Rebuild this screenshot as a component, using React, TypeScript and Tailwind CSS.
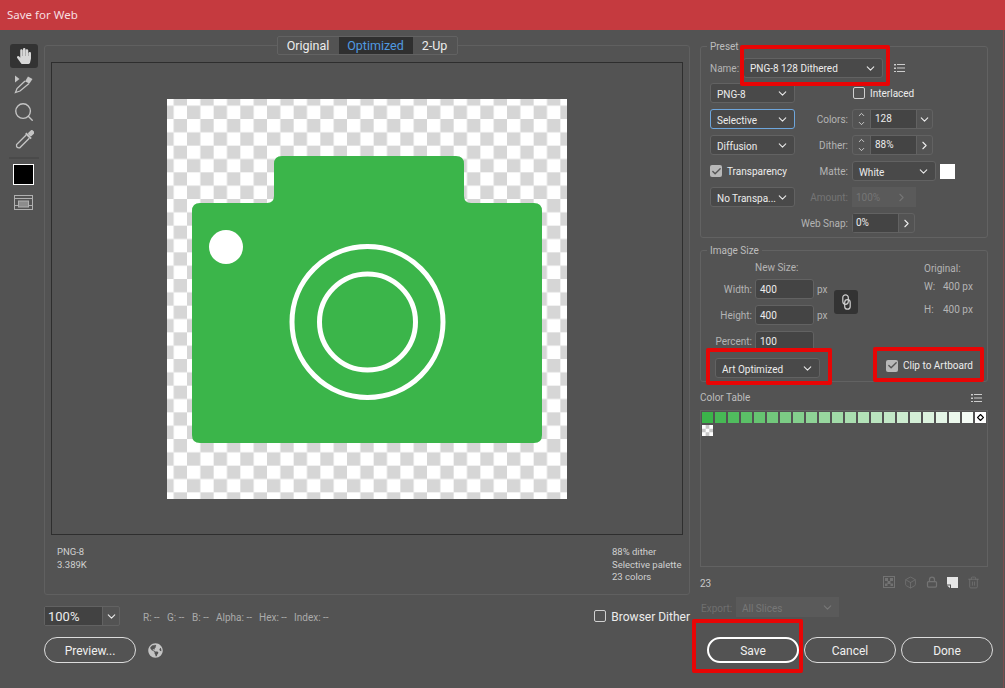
import { ReactNode } from "react";
import { ChevronDown, ChevronRight, ChevronUp, Check, Search, Box, Lock, Trash2 } from "lucide-react";
import { FaHandPaper, FaGlobeAmericas } from "react-icons/fa";

const swatches = [
  "bg-[#3bb54a]", "bg-[#47b955]", "bg-[#50bc5e]", "bg-[#5bc067]", "bg-[#66c471]", "bg-[#72c87c]",
  "bg-[#7ccc85]", "bg-[#84cf8d]", "bg-[#8ed396]", "bg-[#98d79f]", "bg-[#a1dba8]", "bg-[#aadeb0]",
  "bg-[#b3e2b8]", "bg-[#bae4bf]", "bg-[#c3e8c7]", "bg-[#cdecd0]", "bg-[#d3eed6]", "bg-[#dcf2de]",
  "bg-[#e4f5e6]", "bg-[#ebf8ec]", "bg-[#f4fbf5]",
];

const Select = ({ label, className, nudge = false }: { label: string; className: string; nudge?: boolean }) => (
  <div className={`h-[20px] flex items-center justify-between pl-[6px] pr-[5px] rounded-[3px] border border-[#626262] bg-[#494949] text-[#ececec] ${className}`}>
    <span className={`whitespace-nowrap ${nudge ? "pt-[2px]" : ""}`}>{label}</span>
    <ChevronDown size={13} strokeWidth={2} className="text-[#e8e8e8] shrink-0" />
  </div>
);

const Stepper = ({ value, right }: { value: string; right: ReactNode }) => (
  <div className="h-[20px] w-[81px] flex rounded-[3px] border border-[#626262] text-[#ececec]">
    <div className="w-[18px] flex flex-col items-center justify-center border-r border-[#626262]">
      <ChevronUp size={9} strokeWidth={2} />
      <ChevronDown size={9} strokeWidth={2} />
    </div>
    <div className="w-[45px] bg-[#444444] pl-[4px] leading-[18px]">{value}</div>
    <div className="flex-1 flex items-center justify-center border-l border-[#626262]">{right}</div>
  </div>
);

const Label = ({ children, className = "" }: { children: ReactNode; className?: string }) => (
  <div className={`h-[20px] text-right text-[#b4b4b4] leading-[20px] pt-[1px] ${className}`}>{children}</div>
);

const Legend = ({ children }: { children: ReactNode }) => (
  <div className="-mt-[7px] ml-[6px] px-[3px] w-fit h-[14px] leading-[14px] bg-[#535353] text-[#bdbdbd]">{children}</div>
);

const ListIcon = ({ className = "" }: { className?: string }) => (
  <svg width="11" height="8" viewBox="0 0 11 8" className={className} fill="#cccccc">
    <rect x="0" y="0" width="2" height="1.5" />
    <rect x="3" y="0" width="8" height="1" />
    <rect x="0" y="3.5" width="2" height="1.5" />
    <rect x="3" y="3.5" width="8" height="1" />
    <rect x="0" y="7" width="2" height="1" />
    <rect x="3" y="7" width="8" height="1" />
  </svg>
);

const FieldInput = ({ value }: { value: string }) => (
  <div className="h-[20px] w-[59px] pl-[4px] leading-[19px] rounded-[3px] border border-[#626262] bg-[#444444] text-[#ececec]">{value}</div>
);

const PillButton = ({ children, primary = false }: { children: ReactNode; primary?: boolean }) => (
  <button className={`w-[92px] h-[26px] pt-[1px] rounded-full text-[12px] text-[#f0f0f0] ${primary ? "border-2 border-white" : "border border-[#dcdcdc]"}`}>
    {children}
  </button>
);

const CheckBox = ({ checked = false }: { checked?: boolean }) =>
  checked ? (
    <div className="w-[12px] h-[12px] rounded-[2px] bg-[#b8b8b8] flex items-center justify-center">
      <Check size={11} strokeWidth={3} className="text-[#555555]" />
    </div>
  ) : (
    <div className="w-[12px] h-[12px] rounded-[2px] border border-[#d0d0d0]" />
  );

const Toolbar = () => (
  <div className="w-[44px] shrink-0 flex flex-col items-start pl-[10px] pt-[14px] text-[#c4c4c4]">
    <div className="w-[28px] h-[24px] rounded-[3px] bg-[#333333] flex items-center justify-center">
      <FaHandPaper size={16} className="text-[#d8d8d8]" />
    </div>
    <svg width="20" height="20" viewBox="0 0 20 20" className="mt-[6px] ml-[4px]" fill="none" stroke="#c4c4c4">
      <path d="M1 1.5 L5.5 5 L1 8.5 Z" fill="#c4c4c4" stroke="none" />
      <path d="M14 2.5 L18.5 5 L15.5 9.5 L11 7.5 Z" fill="#c4c4c4" stroke="none" />
      <path d="M11 7 L3 14.5 L1.5 18.5 L6 17 L15 9.5" strokeWidth="1.3" />
    </svg>
    <Search size={22} strokeWidth={1.5} className="mt-[7px] ml-[3px] text-[#c4c4c4]" />
    <svg width="20" height="20" viewBox="0 0 20 20" className="mt-[7px] ml-[4px]" fill="none" stroke="#c4c4c4">
      <g transform="rotate(45 10 10)">
        <rect x="8" y="-3" width="4.5" height="6" rx="1.5" fill="#c4c4c4" stroke="none" />
        <rect x="6.5" y="3" width="7.5" height="2" fill="#c4c4c4" stroke="none" />
        <path d="M8 5 L8 18.5 Q10.2 21.5 12.5 18.5 L12.5 5" strokeWidth="1.3" />
      </g>
    </svg>
    <div className="w-[30px] h-[2px] -ml-[1px] mt-[7px] bg-[#4a4a4a]" />
    <div className="w-[21px] h-[21px] ml-[3px] mt-[5px] bg-black border border-white" />
    <svg width="19" height="15" viewBox="0 0 19 15" className="mt-[10px] ml-[4px]" fill="none" stroke="#b0b0b0">
      <rect x="0.5" y="0.5" width="18" height="14" />
      <path d="M0.5 3.5 H18.5" />
      <rect x="4.5" y="6" width="10" height="6" fill="#8c8c8c" />
      <path d="M0.5 10.5 H4.5 M14.5 10.5 H18.5" />
    </svg>
  </div>
);

const Artwork = () => (
  <svg width="400" height="400" viewBox="0 0 400 400">
    <defs>
      <pattern id="checker" x="-6.67" y="-6.67" width="26.667" height="26.667" patternUnits="userSpaceOnUse">
        <rect width="26.667" height="26.667" fill="#ffffff" />
        <rect x="13.333" width="13.333" height="13.333" fill="#d6d6d6" />
        <rect y="13.333" width="13.333" height="13.333" fill="#d6d6d6" />
      </pattern>
    </defs>
    <rect width="400" height="400" fill="url(#checker)" />
    <path
      d="M115 57 H289 Q297 57 297 65 V97 Q297 104 304 104 H367 Q375 104 375 112 V336 Q375 344 367 344 H33 Q25 344 25 336 V112 Q25 104 33 104 H100 Q107 104 107 97 V65 Q107 57 115 57 Z"
      fill="#3bb54a"
    />
    <circle cx="59" cy="148" r="17" fill="#ffffff" />
    <circle cx="200.5" cy="223" r="75.5" fill="none" stroke="#ffffff" strokeWidth="5" />
    <circle cx="200.5" cy="223" r="48" fill="none" stroke="#ffffff" strokeWidth="5" />
  </svg>
);

const PreviewPane = () => (
  <div className="w-[646px] shrink-0 flex flex-col">
    <div className="relative z-10 mt-[6px] -mb-[10px] h-[19px] flex justify-center text-[12.5px] leading-[17px] text-[#ececec]">
      <div className="flex rounded-[2px] border border-[#626262] bg-[#535353]">
        <div className="w-[61px] text-center">Original</div>
        <div className="w-[74px] text-center bg-[#2f2f2f] text-[#4f9ae0]">Optimized</div>
        <div className="w-[44px] text-center">2-Up</div>
      </div>
    </div>
    <div className="h-[550px] rounded-[3px] border border-[#606060] px-[6px] pt-[16px]">
      <div className="h-[473px] w-[632px] border border-[#2e2e2e] flex items-center justify-center">
        <Artwork />
      </div>
      <div className="mt-[11px] pl-[6px] pr-[6px] flex justify-between text-[9.5px] leading-[12.5px] text-[#d0d0d0]">
        <div>
          <div>PNG-8</div>
          <div>3.389K</div>
        </div>
        <div className="w-[65px] whitespace-nowrap">
          <div>88% dither</div>
          <div>Selective palette</div>
          <div>23 colors</div>
        </div>
      </div>
    </div>
    <div className="mt-[11px] h-[20px] flex items-center">
      <div className="w-[76px] h-[20px] flex rounded-[2px] border border-[#626262] text-[13px] text-[#ececec]">
        <div className="w-[57px] bg-[#424242] pl-[3px] leading-[20px]">100%</div>
        <div className="flex-1 flex items-center justify-center border-l border-[#626262]">
          <ChevronDown size={13} strokeWidth={2} />
        </div>
      </div>
      <div className="ml-[23px] pt-[2px] flex text-[10px] text-[#ababab]">
        <span className="w-[24px]">R: --</span>
        <span className="w-[25px]">G: --</span>
        <span className="w-[24px]">B: --</span>
        <span className="w-[43px]">Alpha: --</span>
        <span className="w-[35px]">Hex: --</span>
        <span>Index: --</span>
      </div>
      <div className="ml-auto flex items-center gap-[5px] text-[12px] text-[#ececec]">
        <CheckBox />
        <span className="pt-[1px]">Browser Dither</span>
      </div>
    </div>
    <div className="mt-[11px] flex items-center">
      <PillButton>Preview...</PillButton>
      <FaGlobeAmericas size={15} className="ml-[12px] text-[#c4c4c4]" />
    </div>
  </div>
);

const PresetPanel = () => (
  <div className="h-[192px] rounded-[3px] border border-[#626262]">
    <Legend>Preset</Legend>
    <div className="mt-[4px] pl-[9px] flex flex-col gap-[6px]">
      <div className="flex items-center mb-[-1px]">
        <Label className="w-[29px]">Name:</Label>
        <Select label="PNG-8 128 Dithered" className="ml-[4px] w-[140px]" />
        <ListIcon className="ml-[11px]" />
      </div>
      <div className="flex items-center">
        <Select label="PNG-8" className="w-[85px]" nudge />
        <div className="ml-[58px] flex items-center gap-[5px] text-[#ececec]">
          <CheckBox />
          <span>Interlaced</span>
        </div>
      </div>
      <div className="flex items-center">
        <Select label="Selective" className="w-[85px] !border-[#6ea6dc]" nudge />
        <Label className="w-[53px]">Colors:</Label>
        <div className="ml-[4px]">
          <Stepper value="128" right={<ChevronDown size={13} strokeWidth={2} />} />
        </div>
      </div>
      <div className="flex items-center">
        <Select label="Diffusion" className="w-[85px]" nudge />
        <Label className="w-[53px]">Dither:</Label>
        <div className="ml-[4px]">
          <Stepper value="88%" right={<ChevronRight size={13} strokeWidth={2} />} />
        </div>
      </div>
      <div className="flex items-center">
        <div className="w-[85px] flex items-center gap-[5px] text-[#ececec]">
          <CheckBox checked />
          <span>Transparency</span>
        </div>
        <Label className="w-[53px]">Matte:</Label>
        <Select label="White" className="ml-[4px] w-[84px]" nudge />
        <div className="ml-[4px] w-[15px] h-[15px] bg-white" />
      </div>
      <div className="flex items-center">
        <Select label="No Transpa..." className="w-[85px]" nudge />
        <Label className="w-[53px] !text-[#757575]">Amount:</Label>
        <div className="ml-[4px] w-[64px] h-[20px] pl-[4px] pr-[8px] flex items-center justify-between bg-[#5a5a5a] text-[#757575]">
          100%
          <ChevronRight size={13} strokeWidth={2} />
        </div>
      </div>
      <div className="flex items-center">
        <div className="w-[85px]" />
        <Label className="w-[53px] whitespace-nowrap">Web Snap:</Label>
        <div className="ml-[4px] w-[63px] h-[20px] flex rounded-[3px] border border-[#626262] text-[#ececec]">
          <div className="w-[45px] bg-[#444444] pl-[3px] leading-[18px]">0%</div>
          <div className="flex-1 flex items-center justify-center border-l border-[#626262]">
            <ChevronRight size={13} strokeWidth={2} />
          </div>
        </div>
      </div>
    </div>
  </div>
);

const ImageSizePanel = () => (
  <div className="mt-[12px] h-[132px] rounded-[3px] border border-[#626262]">
    <Legend>Image Size</Legend>
    <div className="mt-[2px] flex">
      <div className="w-[129px]">
        <div className="pl-[54px] h-[16px] leading-[16px] text-[#b4b4b4]">New Size:</div>
        <div className="mt-[3px] flex flex-col gap-[6px]">
          <div className="flex h-[20px]">
            <Label className="w-[51px]">Width:</Label>
            <div className="ml-[3px]"><FieldInput value="400" /></div>
            <span className="ml-[3px] pt-[1px] leading-[20px] text-[#b4b4b4]">px</span>
          </div>
          <div className="flex h-[20px]">
            <Label className="w-[51px]">Height:</Label>
            <div className="ml-[3px]"><FieldInput value="400" /></div>
            <span className="ml-[3px] pt-[1px] leading-[20px] text-[#b4b4b4]">px</span>
          </div>
          <div className="flex h-[20px]">
            <Label className="w-[51px]">Percent:</Label>
            <div className="ml-[3px]"><FieldInput value="100" /></div>
          </div>
        </div>
      </div>
      <div className="ml-[4px] mt-[30px] w-[24px] h-[24px] rounded-[3px] bg-[#333333] flex items-center justify-center">
        <svg width="9" height="16" viewBox="0 0 9 16" fill="none" stroke="#d0d0d0" strokeWidth="1.2">
          <rect x="0.8" y="0.8" width="5.5" height="9.5" rx="2.75" />
          <rect x="2.7" y="5.7" width="5.5" height="9.5" rx="2.75" />
        </svg>
      </div>
      <div className="ml-[66px] pt-[1px] text-[#b4b4b4]">
        <div className="h-[16px] leading-[16px]">Original:</div>
        <div className="mt-[2px] h-[16px] leading-[16px] flex">
          <span className="w-[19px]">W:</span>
          <span>400 px</span>
        </div>
        <div className="mt-[7px] h-[16px] leading-[16px] flex">
          <span className="w-[19px]">H:</span>
          <span>400 px</span>
        </div>
      </div>
    </div>
    <div className="mt-[7px] pl-[14px] flex items-start">
      <Select label="Art Optimized" className="w-[105px]" nudge />
      <div className="ml-[66px] flex items-center gap-[5px] text-[#ececec]">
        <CheckBox checked />
        <span>Clip to Artboard</span>
      </div>
    </div>
  </div>
);

const ColorTable = () => (
  <div>
    <div className="mt-[9px] h-[14px] flex items-center justify-between pr-[6px] leading-[16px] text-[#bdbdbd]">
      <span>Color Table</span>
      <ListIcon />
    </div>
    <div className="mt-[5px] h-[157px] border border-[#626262] pl-[1px] pt-[1px]">
      <div className="flex flex-wrap gap-[2px] w-[284px]">
        {swatches.map((color) => (
          <div key={color} className={`w-[11px] h-[11px] ${color}`} />
        ))}
        <div className="w-[11px] h-[11px] bg-white flex items-center justify-center">
          <svg width="7" height="7" viewBox="0 0 7 7">
            <path d="M3.5 0.5 L6.5 3.5 L3.5 6.5 L0.5 3.5 Z" fill="none" stroke="#000000" strokeWidth="1.2" />
          </svg>
        </div>
        <svg width="11" height="11" viewBox="0 0 12 12">
          <rect width="12" height="12" fill="#ffffff" />
          <path d="M4 0H8V4H4Z M0 4H4V8H0Z M8 4H12V8H8Z M4 8H8V12H4Z" fill="#c8c8c8" />
        </svg>
      </div>
    </div>
    <div className="mt-[6px] h-[18px] flex items-center text-[#c8c8c8]">
      <span className="pt-[2px]">23</span>
      <div className="ml-auto mr-[8px] flex items-center gap-[9px] text-[#737373]">
        <svg width="12" height="12" viewBox="0 0 12 12">
          <rect x="0.5" y="0.5" width="11" height="11" fill="none" stroke="#737373" />
          <path d="M2 2H5V5H2Z M7 2H10V5H7Z M4.5 5H7.5V8H4.5Z M2 7.5H4.5V10H2Z M7.5 7.5H10V10H7.5Z" fill="#737373" />
        </svg>
        <Box size={13} strokeWidth={1.5} />
        <Lock size={12} strokeWidth={2.5} />
        <svg width="11" height="11" viewBox="0 0 11 11">
          <path d="M0 0H11V11H4V7.5H0Z" fill="#e6e6e6" />
          <path d="M0 8.5H3V11Z" fill="#e6e6e6" />
        </svg>
        <Trash2 size={13} strokeWidth={1.5} />
      </div>
    </div>
    <div className="mt-[6px] h-[20px] flex items-center text-[#6f6f6f]">
      <span className="pl-[1px] pt-[2px] w-[36px]">Export:</span>
      <div className="w-[103px] h-[20px] pl-[6px] pr-[5px] flex items-center justify-between bg-[#5a5a5a] text-[#777777]">
        <span className="pt-[2px]">All Slices</span>
        <ChevronDown size={13} strokeWidth={2} />
      </div>
    </div>
  </div>
);

const RedBox = ({ className }: { className: string }) => (
  <div className={`absolute border-[4px] border-[#e80505] rounded-[2px] pointer-events-none ${className}`} />
);

export default function App() {
  return (
    <div className="relative w-[1005px] h-[688px] overflow-hidden bg-[#535353] text-[10px] font-['Roboto',sans-serif]">
      <div className="h-[30px] bg-[#c53a3f] pl-[7px] leading-[30px] text-[11.5px] text-[#f6dfe0] font-['Noto_Sans',sans-serif]">Save for Web</div>
      <div className="flex w-[1004px] h-[658px] border-r border-[#7e4c4e]">
        <Toolbar />
        <PreviewPane />
        <div className="ml-[10px] w-[293px] pt-[16px]">
          <div className="w-[288px]">
            <PresetPanel />
            <ImageSizePanel />
            <ColorTable />
          </div>
          <div className="mt-[20px] pl-[7px] flex gap-[5px]">
            <PillButton primary>Save</PillButton>
            <PillButton>Cancel</PillButton>
            <PillButton>Done</PillButton>
          </div>
        </div>
      </div>
      <RedBox className="left-[740px] top-[45px] w-[150px] h-[41px]" />
      <RedBox className="left-[706px] top-[348px] w-[126px] h-[37px]" />
      <RedBox className="left-[873px] top-[347px] w-[111px] h-[35px]" />
      <RedBox className="left-[692px] top-[619px] w-[111px] h-[54px]" />
    </div>
  );
}
